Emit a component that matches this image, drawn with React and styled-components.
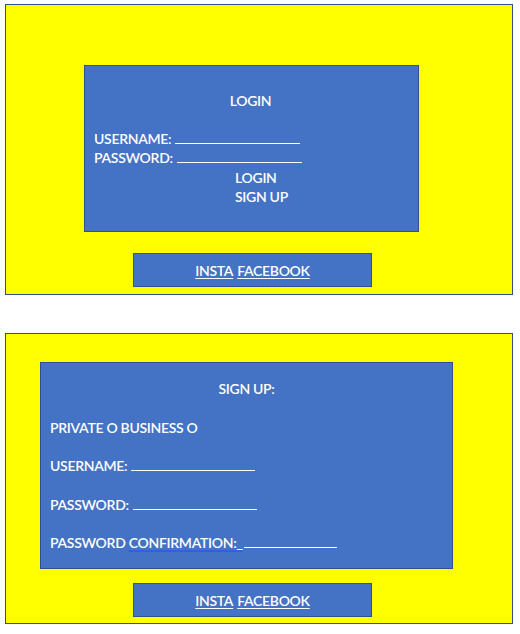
import React from 'react';
import styled, { createGlobalStyle } from 'styled-components';

const GlobalStyle = createGlobalStyle`
  body {
    margin: 0;
    padding: 0;
    background-color: #FFFFFF;
    font-family: 'Lato', 'Open Sans', Arial, sans-serif;
  }
`;

const Page = styled.div`
  display: flex;
  flex-direction: column;
  gap: 38px;
  padding: 4px 0 0 5px;
`;

const Panel = styled.section`
  box-sizing: border-box;
  width: 508px;
  height: ${props => props.height}px;
  background-color: #FFFF00;
  border: 1px solid #2F528F;
  display: flex;
  flex-direction: column;
  align-items: flex-start;
  padding-top: ${props => props.padTop}px;
`;

const Card = styled.div`
  box-sizing: border-box;
  width: ${props => props.width}px;
  height: ${props => props.height}px;
  margin-left: ${props => props.left}px;
  background-color: #4472C4;
  border: 1px solid #2F528F;
  color: #FFFFFF;
  font-size: 14px;
  font-weight: 600;
  letter-spacing: -0.3px;
  padding-top: ${props => props.padTop}px;
  display: flex;
  flex-direction: column;
`;

const Title = styled.div`
  text-align: center;
  line-height: ${props => props.lh}px;
  margin-right: ${props => props.nudge || 0}px;
`;

const Line = styled.div`
  line-height: ${props => props.lh}px;
  padding-left: ${props => props.indent || 9}px;
  white-space: nowrap;
`;

const Blank = styled.span`
  display: inline-block;
  width: ${props => props.width}px;
  margin-left: ${props => props.gap ?? 4}px;
  border-bottom: 1.5px solid #FFFFFF;
  height: 1px;
  vertical-align: baseline;
`;

const Linked = styled.span`
  text-decoration: underline;
  text-decoration-color: #2F5FE8;
  text-decoration-thickness: 1.5px;
  text-underline-offset: 2px;
`;

const Footer = styled.div`
  box-sizing: border-box;
  width: 239px;
  height: 34px;
  margin-left: 127px;
  margin-top: ${props => props.top}px;
  background-color: #4472C4;
  border: 1px solid #2F528F;
  display: flex;
  justify-content: center;
  align-items: center;
  gap: 4px;
  color: #FFFFFF;
  font-size: 14px;
  font-weight: 600;
  letter-spacing: -0.3px;
`;

const SocialLink = styled.a`
  color: #FFFFFF;
  text-decoration: underline;
  text-underline-offset: 2px;
`;

function SocialBar({ top }) {
  return (
    <Footer top={top}>
      <SocialLink href="#">INSTA</SocialLink>
      <SocialLink href="#">FACEBOOK</SocialLink>
    </Footer>
  );
}

export default function App() {
  return (
    <>
      <GlobalStyle />
      <Page>
        <Panel height={291} padTop={60}>
          <Card width={335} height={167} left={78} padTop={25}>
            <Title lh={20} nudge={2}>LOGIN</Title>
            <Line lh={19.3} style={{ marginTop: 18 }}>USERNAME:<Blank width={125} /></Line>
            <Line lh={19.3}>PASSWORD:<Blank width={125} /></Line>
            <Line lh={19.3} indent={150}>LOGIN</Line>
            <Line lh={19.3} indent={150}>SIGN UP</Line>
          </Card>
          <SocialBar top={21} />
        </Panel>
        <Panel height={291} padTop={28}>
          <Card width={413} height={207} left={34} padTop={7}>
            <Title lh={38.5}>SIGN UP:</Title>
            <Line lh={38.5}>PRIVATE O BUSINESS O</Line>
            <Line lh={38.5}>USERNAME:<Blank width={124} /></Line>
            <Line lh={38.5}>PASSWORD:<Blank width={124} /></Line>
            <Line lh={38.5}>PASSWORD <Linked>CONFIRMATION:_</Linked><Blank width={93} gap={1} /></Line>
          </Card>
          <SocialBar top={14} />
        </Panel>
      </Page>
    </>
  );
}
